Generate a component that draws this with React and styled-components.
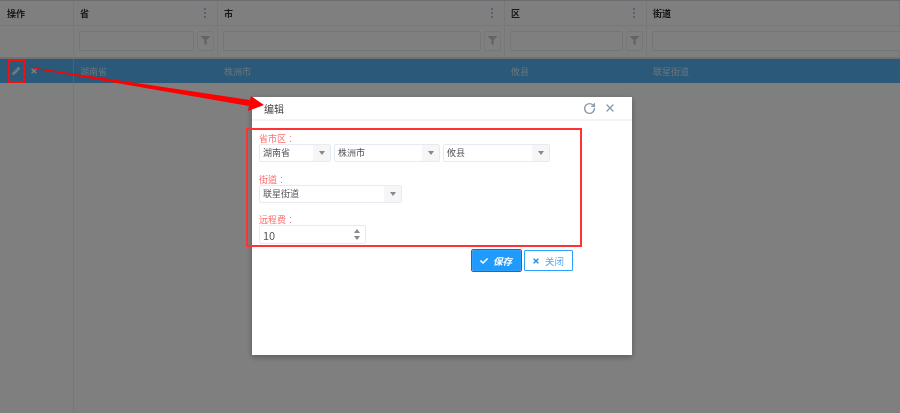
import React from 'react';
import styled, { createGlobalStyle } from 'styled-components';
import { FaPencilAlt, FaTimes, FaCheck, FaFilter } from 'react-icons/fa';
import { RotateCw, X } from 'lucide-react';

const GlobalStyle = createGlobalStyle`
  html, body {
    margin: 0;
    padding: 0;
    background: #fff;
    font-family: "Noto Sans CJK SC", "Liberation Sans", sans-serif;
    overflow: hidden;
  }
`;

const columns = [
  { title: '省', value: '湖南省' },
  { title: '市', value: '株洲市' },
  { title: '区', value: '攸县' },
  { title: '街道', value: '联星街道', last: true },
];

const Page = styled.div`
  width: 900px;
  height: 413px;
  position: relative;
  overflow: hidden;
  filter: blur(0.45px);
`;

const Grid = styled.div`
  display: grid;
  grid-template-columns: 74px 144px 287px 142px 253px;
  grid-template-rows: 25px 33px 24px 1fr;
  height: 413px;
  border-top: 1px solid #d4d9e2;
  box-sizing: border-box;
`;

const HeadCell = styled.div`
  display: flex;
  align-items: center;
  justify-content: space-between;
  padding: 0 6px 0 ${(p) => (p.$ops ? '7px' : '6px')};
  font-size: 9px;
  font-weight: 700;
  color: #333;
  border-right: 1px solid #f0f0f0;
  border-bottom: 1px solid #f0f0f0;
`;

const Dots = styled.span`
  display: flex;
  flex-direction: column;
  gap: 2px;
  margin-right: 5px;

  i {
    width: 2px;
    height: 2px;
    background: #a9c4e6;
  }
`;

const FilterCell = styled.div`
  display: flex;
  align-items: center;
  gap: 3px;
  padding: 0 3px 2px 5px;
  border-right: 1px solid #f0f0f0;
  border-bottom: 2px solid #e2e2e2;
  min-width: 0;
`;

const FilterInput = styled.div`
  flex: 1;
  height: 20px;
  background: #fff;
  border: 1px solid #ebebeb;
  border-radius: 2px;
  box-sizing: border-box;
  margin-right: ${(p) => (p.$open ? '-20px' : '0')};
`;

const FilterButton = styled.div`
  width: 17px;
  height: 20px;
  box-sizing: border-box;
  border: 1px solid #eee;
  border-radius: 2px;
  display: flex;
  align-items: center;
  justify-content: center;
  color: #c8c8c8;
  font-size: 9px;
`;

const RowCell = styled.div`
  display: flex;
  align-items: center;
  gap: 10px;
  padding-left: ${(p) => (p.$ops ? '12px' : '6px')};
  background: #55b2f2;
  color: #fff;
  font-size: 9px;
  border-right: ${(p) => (p.$ops ? '1px solid #7fcbff' : '0')};
`;

const RowText = styled.span`
  opacity: 0.7;
`;

const FrozenRest = styled.div`
  border-right: 1px solid #f0f0f0;
`;

const Overlay = styled.div`
  position: absolute;
  inset: 0;
  background: rgba(0, 0, 0, 0.5);
`;

const Dialog = styled.div`
  position: absolute;
  left: 252px;
  top: 97px;
  width: 380px;
  height: 258px;
  background: #fff;
  box-shadow: 0 2px 6px rgba(0, 0, 0, 0.3);
`;

const DialogHeader = styled.div`
  display: flex;
  align-items: center;
  justify-content: space-between;
  height: 22px;
  padding: 0 16px 0 12px;
  border-bottom: 2px solid #f4f4f4;
  font-size: 10px;
  color: #444;
`;

const HeaderTools = styled.div`
  display: flex;
  align-items: center;
  gap: 8px;
  color: #8899ad;
`;

const FormBox = styled.div`
  width: 336px;
  height: 119px;
  box-sizing: border-box;
  margin: 7px 0 0 -6px;
  padding: 3px 0 0 11px;
  border: 2px solid #f33;
  display: flex;
  flex-direction: column;
`;

const Label = styled.div`
  height: 11px;
  line-height: 11px;
  margin-top: ${(p) => p.$top || 0}px;
  font-family: "Noto Sans CJK TC", sans-serif;
  font-size: 9px;
  color: #ff7070;
`;

const SelectRow = styled.div`
  display: flex;
  gap: 3px;
`;

const Select = styled.div`
  width: ${(p) => p.$width}px;
  height: 18px;
  box-sizing: border-box;
  display: flex;
  justify-content: space-between;
  border: 1px solid #e6ebf2;
  border-radius: 2px;
  font-size: 9px;
  color: #555;
  line-height: 16px;
  padding-left: 3px;
`;

const Caret = styled.span`
  width: 17px;
  background: #f6f6f6;
  display: flex;
  align-items: center;
  justify-content: center;

  &::after {
    content: '';
    border-left: 3px solid transparent;
    border-right: 3px solid transparent;
    border-top: 4px solid #888;
  }
`;

const Spinner = styled.div`
  width: 107px;
  height: 19px;
  box-sizing: border-box;
  display: flex;
  align-items: center;
  justify-content: space-between;
  padding: 0 5px 0 3px;
  border: 1px solid #e6ebf2;
  border-radius: 2px;
  font-size: 11px;
  color: #555;
`;

const Arrows = styled.span`
  display: flex;
  flex-direction: column;
  gap: 3px;
`;

const Tri = styled.i`
  border-left: 3px solid transparent;
  border-right: 3px solid transparent;
  ${(p) => (p.$up ? 'border-bottom: 4px solid #888;' : 'border-top: 4px solid #888;')}
`;

const Actions = styled.div`
  display: flex;
  justify-content: flex-end;
  align-items: flex-start;
  gap: 3px;
  width: 321px;
  margin-top: 3px;
`;

const Button = styled.div`
  width: 49px;
  height: 21px;
  box-sizing: border-box;
  display: flex;
  align-items: center;
  gap: 5px;
  padding-left: 7px;
  font-size: 9.5px;
  border-radius: 1px;
  border: 1px solid #2aa0ff;
  background: ${(p) => (p.$primary ? '#1f9bfd' : '#fff')};
  color: ${(p) => (p.$primary ? '#fff' : '#5aa9ea')};
  outline: ${(p) => (p.$primary ? '1px solid #e5202a' : 'none')};
  font-style: ${(p) => (p.$primary ? 'italic' : 'normal')};
  font-weight: ${(p) => (p.$primary ? 700 : 400)};
`;

const Marker = styled.div`
  position: absolute;
  left: 8px;
  top: 59px;
  width: 17px;
  height: 24px;
  box-sizing: border-box;
  border: 2px solid #e11;
`;

const ArrowSvg = styled.svg`
  position: absolute;
  left: 0;
  top: 0;
`;

const App = () => (
  <Page>
    <GlobalStyle />
    <Grid>
      <HeadCell $ops>操作</HeadCell>
      {columns.map((c) => (
        <HeadCell key={c.title}>
          {c.title}
          {!c.last && (
            <Dots>
              <i />
              <i />
              <i />
            </Dots>
          )}
        </HeadCell>
      ))}
      <FilterCell />
      {columns.map((c) => (
        <FilterCell key={c.title}>
          <FilterInput $open={c.last} />
          {!c.last && (
            <FilterButton>
              <FaFilter />
            </FilterButton>
          )}
        </FilterCell>
      ))}
      <RowCell $ops>
        <FaPencilAlt size={8} />
        <FaTimes size={8} />
      </RowCell>
      {columns.map((c) => (
        <RowCell key={c.title}>
          <RowText>{c.value}</RowText>
        </RowCell>
      ))}
      <FrozenRest />
    </Grid>
    <Overlay />
    <Dialog>
      <DialogHeader>
        编辑
        <HeaderTools>
          <RotateCw size={13} strokeWidth={2.6} />
          <X size={12} strokeWidth={2.8} />
        </HeaderTools>
      </DialogHeader>
      <FormBox>
        <Label>省市区：</Label>
        <SelectRow>
          <Select $width={72}>湖南省<Caret /></Select>
          <Select $width={106}>株洲市<Caret /></Select>
          <Select $width={107}>攸县<Caret /></Select>
        </SelectRow>
        <Label $top={12}>街道：</Label>
        <Select $width={143}>联星街道<Caret /></Select>
        <Label $top={11}>远程费：</Label>
        <Spinner>
          10
          <Arrows>
            <Tri $up />
            <Tri />
          </Arrows>
        </Spinner>
      </FormBox>
      <Actions>
        <Button $primary>
          <FaCheck size={8} />
          保存
        </Button>
        <Button>
          <FaTimes size={8} color="#2b8fe0" />
          关闭
        </Button>
      </Actions>
    </Dialog>
    <Marker />
    <ArrowSvg width="900" height="413" viewBox="0 0 900 413">
      <polygon points="33,67.4 250,100 251,96 264,105 248,111 249,106 33,68.6" fill="#f00" />
    </ArrowSvg>
  </Page>
);

export default App;
